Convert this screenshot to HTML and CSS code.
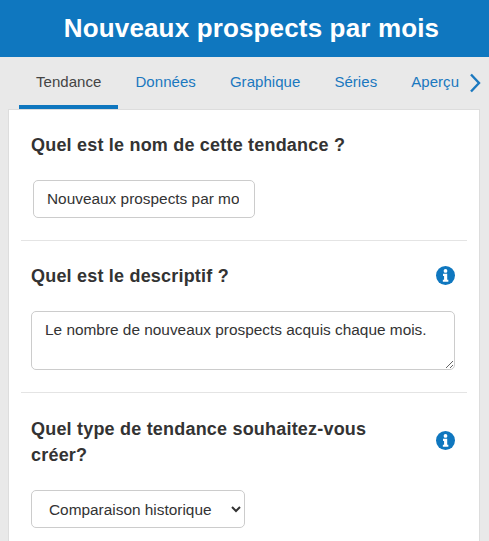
FILE: index.html
```html
<!DOCTYPE html>
<html lang="fr">
<head>
<meta charset="utf-8">
<title>Nouveaux prospects par mois</title>
<link rel="stylesheet" href="styles.css">
</head>
<body>
<header class="title-bar"><h1>Nouveaux prospects par mois</h1></header>
<nav class="tabs">
  <a class="tab active">Tendance</a>
  <a class="tab">Données</a>
  <a class="tab">Graphique</a>
  <a class="tab">Séries</a>
  <a class="tab">Aperçu</a>
  <svg class="next" width="12" height="20" viewBox="0 0 12 20"><path d="M2 1.5 10 10 2 18.5" fill="none" stroke="#1a78bf" stroke-width="2.4"/></svg>
</nav>
<main class="card">
  <section class="sec sec-name">
    <h2>Quel est le nom de cette tendance ?</h2>
    <input class="field name-input" type="text" value="Nouveaux prospects par mois">
  </section>
  <section class="sec sec-desc">
    <div class="head">
      <h2>Quel est le descriptif ?</h2>
      <svg class="info" viewBox="0 0 20 20"><circle cx="10" cy="10" r="10" fill="#0f77bf"/><circle cx="10" cy="5.2" r="2" fill="#fff"/><path d="M7.4 8.2h4.4v6.3h1.2v2.2H7.2v-2.2h1.3v-4H7.4z" fill="#fff"/></svg>
    </div>
    <textarea class="field desc">Le nombre de nouveaux prospects acquis chaque mois.</textarea>
  </section>
  <section class="sec sec-type">
    <div class="head">
      <h2>Quel type de tendance souhaitez-vous créer?</h2>
      <svg class="info" viewBox="0 0 20 20"><circle cx="10" cy="10" r="10" fill="#0f77bf"/><circle cx="10" cy="5.2" r="2" fill="#fff"/><path d="M7.4 8.2h4.4v6.3h1.2v2.2H7.2v-2.2h1.3v-4H7.4z" fill="#fff"/></svg>
    </div>
    <select class="field type-select"><option>Comparaison historique</option></select>
  </section>
</main>
</body>
</html>
```
FILE: styles.css
```css
html, body { margin: 0; padding: 0; height: 541px; overflow: hidden; }
body { background: #e9e9e9; font-family: "Liberation Sans", Arial, sans-serif; color: #333; }
.title-bar { background: #0f77bf; height: 57px; display: flex; align-items: center; justify-content: center; padding-left: 14px; }
h1 { margin: 0; color: #fff; font-size: 26px; font-weight: 700; letter-spacing: 0.15px; }
.tabs { height: 52px; display: flex; align-items: flex-start; padding-left: 19px; box-sizing: border-box; position: relative; }
.tab { height: 52px; box-sizing: border-box; padding: 16px 17px 0; font-size: 15px; line-height: 18px; color: #1a78bf; letter-spacing: 0.05px; }
.tab.active { color: #444; border-bottom: 4px solid #0f77bf; }
.next { position: absolute; left: 469px; top: 16px; }
.card { background: #fff; margin: 0 9px 0 8px; height: 432px; border: 1px solid #ddd; border-bottom: 0; padding: 0 12px; box-sizing: border-box; }
.sec { border-bottom: 1px solid #e4e4e4; }
h2 { margin: 0; font-size: 18px; line-height: 26px; font-weight: 700; color: #333; letter-spacing: 0.2px; }
.sec-name { height: 131px; padding: 22px 10px 0; box-sizing: border-box; }
.sec-desc { height: 152px; padding: 22px 10px 0; box-sizing: border-box; }
.sec-type { border-bottom: 0; padding: 23px 10px 0; }
.head { display: flex; justify-content: space-between; align-items: center; }
.sec-type h2 { width: 370px; }
.info { width: 19px; height: 19px; margin-right: 2px; }
.sec-desc .info { margin-top: -2px; }
.sec-type .info { margin-top: -4px; }
.field { display: block; font-family: inherit; font-size: 15.4px; color: #333; background: #fff; border: 1px solid #ccc; border-radius: 5px; box-sizing: border-box; outline: none; }
.name-input { width: 222px; height: 38px; margin: 22px 0 0 2px; padding: 0 15px 0 13px; }
.desc { width: 424px; height: 59px; margin-top: 22px; padding: 9px 13px 6px; resize: vertical; }
.type-select { width: 214px; height: 38px; margin-top: 22px; padding: 0 13px; }
```
